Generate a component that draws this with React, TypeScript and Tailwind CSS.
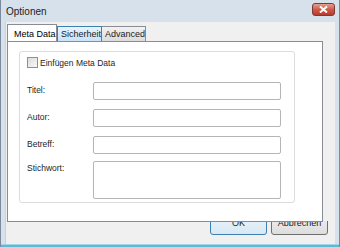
import React from "react";

const font = { fontFamily: '"Liberation Sans", Tahoma, Arial, sans-serif' };

function Row({ label, tall, mt }: { label: string; tall?: boolean; mt: string }) {
  return (
    <div className={`flex items-start ${mt}`}>
      <div className={`w-[66px] text-[8.5px] leading-[10px] text-[#1e1e1e] ${tall ? "pt-[2px]" : "pt-[3px]"}`}>{label}</div>
      <div
        className={`w-[188px] ${tall ? "h-[38px]" : "h-[18px]"} border border-[#b5b5b5] bg-white rounded-[2px]`}
      />
    </div>
  );
}

export default function App() {
  return (
    <div
      className="w-[340px] h-[247px] bg-[#d7e1ec] border-l border-r border-[#7a8a9c] flex flex-col overflow-hidden"
      style={font}
    >
      {/* title bar */}
      <div className="h-[22px] flex items-center justify-between pl-[5px] pr-[4px] shrink-0">
        <span className="text-[10px] text-[#1c1c1c]">Optionen</span>
        <div className="w-[23px] h-[13px] mt-[-3px] rounded-[3px] border border-[#7d3a35] bg-gradient-to-b from-[#e3a091] via-[#cc5a4b] to-[#b83a2c] flex items-center justify-center">
          <svg width="9" height="7" viewBox="0 0 9 7">
            <path d="M1 0.5 L8 6.5 M8 0.5 L1 6.5" stroke="#fff" strokeWidth="2" />
          </svg>
        </div>
      </div>
      {/* client */}
      <div className="mx-[4px] h-[222px] bg-[#f0f0f0] border-l border-[#c9d2dc] flex flex-col shrink-0 overflow-hidden">
        <div className="pl-[1px] pt-[2px] flex items-end h-[19px] shrink-0 whitespace-nowrap">
          <div className="w-[50px] h-[18px] bg-white border border-b-0 border-[#898c95] text-[9px] leading-[10px] pl-[6px] pt-[4px] relative z-10 mb-[-1px]">
            Meta Data
          </div>
          <div className="h-[15px] w-[45px] bg-gradient-to-b from-[#e9f4fd] to-[#c8e3f9] border border-b-0 border-[#3c7fb1] text-[9px] leading-[10px] pl-[3px] pt-[2px] text-[#1a1a1a]">
            Sicherheit
          </div>
          <div className="h-[15px] w-[44px] bg-gradient-to-b from-[#f2f2f2] to-[#dcdcdc] border border-b-0 border-l-0 border-[#898c95] text-[9px] leading-[10px] pl-[3px] pt-[2px] text-[#1a1a1a]">
            Advanced
          </div>
        </div>
        <div className="ml-[1px] w-[316px] h-[181px] bg-white border border-[#898c95] shrink-0 relative z-10 pt-[9px] pl-[11px]">
          <div className="w-[276px] h-[152px] border border-[#dcdcdc] rounded-[3px] pl-[7px] pt-[5px]">
            <div className="flex items-center h-[11px]">
              <div className="w-[11px] h-[11px] border border-[#8f8f8f] bg-gradient-to-br from-[#dcdcdc] to-[#f8f8f8]" />
              <span className="text-[8.5px] leading-[10px] text-[#1e1e1e] ml-[2px]">Einfügen Meta Data</span>
            </div>
            <div className="flex flex-col">
              <Row label="Titel:" mt="mt-[14px]" />
              <Row label="Autor:" mt="mt-[9px]" />
              <Row label="Betreff:" mt="mt-[9px]" />
              <Row label="Stichwort:" tall mt="mt-[7px]" />
            </div>
          </div>
        </div>
        <div className="h-[15px] overflow-hidden flex justify-end pr-[7px] gap-[4px] mt-[-1px]">
          <div className="w-[57px] h-[23px] mt-[-9px] border border-[#3c7fb1] rounded-[3px] bg-gradient-to-b from-[#eaf6fd] to-[#d9e8f2] text-[9px] flex items-center justify-center text-[#1a1a1a]">
            OK
          </div>
          <div className="w-[57px] h-[23px] mt-[-9px] border border-[#707070] rounded-[3px] bg-gradient-to-b from-[#f2f2f2] to-[#dddddd] text-[9px] flex items-center justify-center text-[#1a1a1a]">
            Abbrechen
          </div>
        </div>
      </div>
      <div className="flex-1 bg-[#5fb8d4] border-t border-[#9fd6e8]" />
    </div>
  );
}
